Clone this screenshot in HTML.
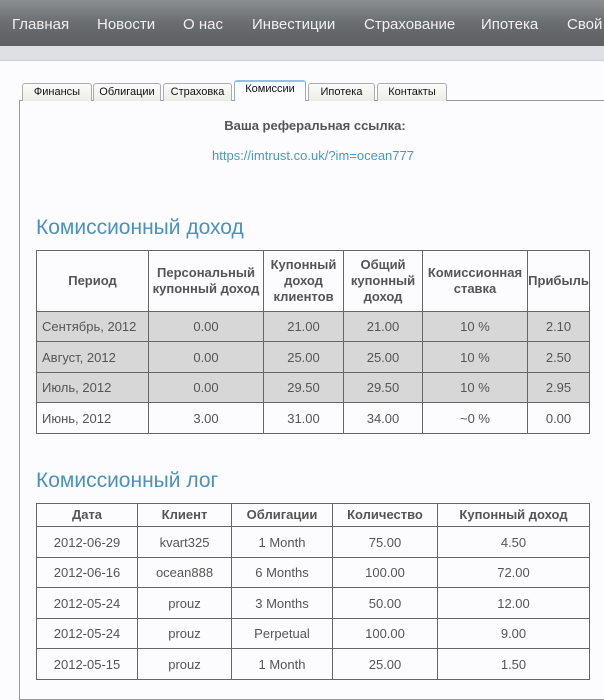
<!DOCTYPE html>
<html><head><meta charset="utf-8"><style>
*{margin:0;padding:0;box-sizing:border-box}
body{width:604px;height:690px;overflow:hidden;background:#fcfcfe;font-family:"Liberation Sans",Arial,sans-serif;color:#555;position:relative}
.nav{position:absolute;left:0;top:0;width:604px;height:46px;background:linear-gradient(#8b8e91,#6a6d70 50%,#5d6063);}
.nav span{position:absolute;top:16px;font-size:15px;color:#f0f0f0;white-space:nowrap}
.strip{position:absolute;left:0;top:46px;width:604px;height:15px;background:#dfe0e3;border-bottom:1px solid #cfd0d3}
.tab{position:absolute;top:83px;height:18px;border:1px solid #a9adb0;border-bottom:none;border-radius:3px 3px 0 0;background:linear-gradient(#fbfbf9,#ecece8);font-size:11px;color:#111;text-align:center;line-height:17px}
.tab.act{top:80px;height:21px;background:#fcfcfe;border-color:#9ab;border-top:2px solid #8ec3e8;line-height:15px;z-index:2}
.panel{position:absolute;left:19px;top:100px;width:600px;height:600px;border:1px solid #999;border-right:none;background:#fcfcfe}
.t{position:absolute;text-align:center;width:604px;left:10px}
h2{position:absolute;left:36px;font-weight:normal;font-size:21px;color:#4a92bd}
table{position:absolute;left:36px;border-collapse:collapse;font-size:13px;color:#555}
td,th{border:1px solid #666;text-align:center;padding:0}
th{font-weight:bold;color:#555;line-height:16px}
.g td{background:#d7d7d7}
td.l{text-align:left;padding-left:5px}
</style></head><body>
<div class="nav">
<span style="left:12px">Главная</span><span style="left:97px">Новости</span><span style="left:183px">О нас</span><span style="left:252px">Инвестиции</span><span style="left:364px">Страхование</span><span style="left:481px">Ипотека</span><span style="left:567px">Свой</span>
</div>
<div class="strip"></div>
<div class="panel"></div>
<div class="tab" style="left:22px;width:70px">Финансы</div>
<div class="tab" style="left:93px;width:68px">Облигации</div>
<div class="tab" style="left:163px;width:69px">Страховка</div>
<div class="tab act" style="left:234px;width:72px">Комиссии</div>
<div class="tab" style="left:308px;width:67px">Ипотека</div>
<div class="tab" style="left:377px;width:70px">Контакты</div>
<div class="t" style="top:118px;left:13px;font-size:13px;font-weight:bold;color:#555">Ваша реферальная ссылка:</div>
<div class="t" style="top:148px;left:11px;font-size:13px;color:#4a97c8">https://imtrust.co.uk/?im=ocean777</div>
<h2 style="top:216px">Комиссионный доход</h2>
<table style="top:250px;width:554px">
<tr style="height:61px"><th style="width:112px">Период</th><th style="width:115px">Персональный купонный доход</th><th style="width:80px">Купонный доход клиентов</th><th style="width:79px">Общий купонный доход</th><th style="width:105px">Комиссионная ставка</th><th>Прибыль</th></tr>
<tr class="g" style="height:30px"><td class="l">Сентябрь, 2012</td><td>0.00</td><td>21.00</td><td>21.00</td><td>10 %</td><td>2.10</td></tr>
<tr class="g" style="height:31px"><td class="l">Август, 2012</td><td>0.00</td><td>25.00</td><td>25.00</td><td>10 %</td><td>2.50</td></tr>
<tr class="g" style="height:30px"><td class="l">Июль, 2012</td><td>0.00</td><td>29.50</td><td>29.50</td><td>10 %</td><td>2.95</td></tr>
<tr style="height:31px"><td class="l">Июнь, 2012</td><td>3.00</td><td>31.00</td><td>34.00</td><td>~0 %</td><td>0.00</td></tr>
</table>
<h2 style="top:469px">Комиссионный лог</h2>
<table style="top:503px;width:554px">
<tr style="height:23px"><th style="width:101px">Дата</th><th style="width:94px">Клиент</th><th style="width:101px">Облигации</th><th style="width:105px">Количество</th><th>Купонный доход</th></tr>
<tr style="height:31px"><td>2012-06-29</td><td>kvart325</td><td>1 Month</td><td>75.00</td><td>4.50</td></tr>
<tr style="height:30px"><td>2012-06-16</td><td>ocean888</td><td>6 Months</td><td>100.00</td><td>72.00</td></tr>
<tr style="height:31px"><td>2012-05-24</td><td>prouz</td><td>3 Months</td><td>50.00</td><td>12.00</td></tr>
<tr style="height:30px"><td>2012-05-24</td><td>prouz</td><td>Perpetual</td><td>100.00</td><td>9.00</td></tr>
<tr style="height:31px"><td>2012-05-15</td><td>prouz</td><td>1 Month</td><td>25.00</td><td>1.50</td></tr>
</table>
</body></html>
